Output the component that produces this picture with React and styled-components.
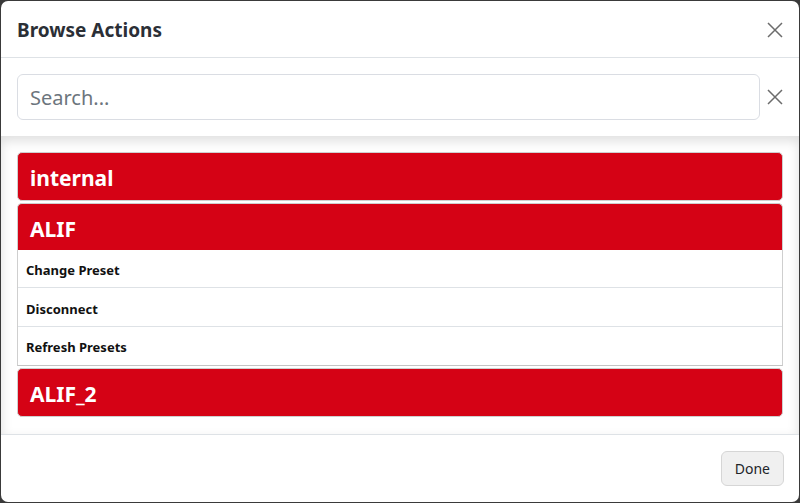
import React, { useState } from "react";
import styled, { createGlobalStyle } from "styled-components";

const GlobalStyle = createGlobalStyle`
    html, body {
        margin: 0;
        padding: 0;
        height: 100%;
        background: #3a3a3a;
        font-family: "Noto Sans", "Open Sans", sans-serif;
    }
    #root {
        height: 100%;
        padding: 1px;
        box-sizing: border-box;
    }
    * {
        box-sizing: border-box;
    }
`;

const groups = [
    { id: "internal", label: "internal", open: false, actions: [] },
    {
        id: "alif",
        label: "ALIF",
        open: true,
        actions: ["Change Preset", "Disconnect", "Refresh Presets"],
    },
    { id: "alif_2", label: "ALIF_2", open: false, actions: [] },
];

const CloseIcon = ({ size = 16 }) => (
    <svg width={size} height={size} viewBox="0 0 16 16">
        <path
            d="M1 1 L15 15 M15 1 L1 15"
            stroke="#6c6c6c"
            strokeWidth="1.5"
            fill="none"
        />
    </svg>
);

const App = () => {
    const [search, setSearch] = useState("");
    const [openGroups, setOpenGroups] = useState(
        groups.filter((g) => g.open).map((g) => g.id)
    );

    const toggle = (id) => {
        setOpenGroups((prev) =>
            prev.includes(id) ? prev.filter((x) => x !== id) : [...prev, id]
        );
    };

    return (
        <>
            <GlobalStyle />
            <Modal>
                <Header>
                    <Title>Browse Actions</Title>
                    <IconButton aria-label="Close">
                        <CloseIcon />
                    </IconButton>
                </Header>
                <SearchRow>
                    <SearchInput
                        placeholder="Search..."
                        value={search}
                        onChange={(e) => setSearch(e.target.value)}
                    />
                    <IconButton onClick={() => setSearch("")} aria-label="Clear">
                        <CloseIcon />
                    </IconButton>
                </SearchRow>
                <Body>
                    {groups.map((group) => {
                        const isOpen =
                            openGroups.includes(group.id) &&
                            group.actions.length > 0;
                        return (
                            <Group key={group.id}>
                                <GroupHeader
                                    isOpen={isOpen}
                                    onClick={() => toggle(group.id)}
                                >
                                    {group.label}
                                </GroupHeader>
                                {isOpen && (
                                    <ActionList>
                                        {group.actions.map((action) => (
                                            <ActionItem key={action}>
                                                {action}
                                            </ActionItem>
                                        ))}
                                    </ActionList>
                                )}
                            </Group>
                        );
                    })}
                </Body>
                <Footer>
                    <DoneButton>Done</DoneButton>
                </Footer>
            </Modal>
        </>
    );
};

export default App;

const Modal = styled.div`
    height: 100%;
    background: #fff;
    border-radius: 7px;
    display: flex;
    flex-direction: column;
    overflow: hidden;
`;

const Header = styled.div`
    height: 57px;
    flex-shrink: 0;
    display: flex;
    align-items: center;
    justify-content: space-between;
    padding: 2px 15px 0 16px;
    border-bottom: 1px solid #dee2e6;
`;

const Title = styled.h5`
    margin: 0;
    font-size: 19px;
    font-weight: 700;
    color: #2b2f36;
`;

const IconButton = styled.button`
    border: none;
    background: transparent;
    padding: 0;
    width: 18px;
    height: 18px;
    display: flex;
    align-items: center;
    justify-content: center;
    cursor: pointer;
`;

const SearchRow = styled.div`
    flex-shrink: 0;
    display: flex;
    align-items: center;
    gap: 6px;
    padding: 16px 15px 16px 16px;
`;

const SearchInput = styled.input`
    flex: 1;
    height: 46px;
    border: 1px solid #dadde3;
    border-radius: 6px;
    padding: 0 12px;
    font-family: "Noto Sans", "Open Sans", sans-serif;
    font-size: 20px;
    color: #212529;
    outline: none;

    &::placeholder {
        color: #6c757d;
    }
`;

const Body = styled.div`
    flex: 1;
    padding: 16px 16px;
    box-shadow: inset 0 5px 12px rgba(0, 0, 0, 0.13);
    overflow: hidden;
    border-bottom: 1px solid #dee2e6;
`;

const Group = styled.div`
    margin-bottom: 2px;
`;

const GroupHeader = styled.div`
    height: ${({ isOpen }) => (isOpen ? "47px" : "49px")};
    display: flex;
    align-items: center;
    padding: 3px 12px 0;
    background: #d50215;
    color: #fff;
    font-size: 21px;
    font-weight: 700;
    border: 1px solid #cfcfcf;
    border-bottom: ${({ isOpen }) => (isOpen ? "none" : "1px solid #cfcfcf")};
    border-radius: ${({ isOpen }) => (isOpen ? "5px 5px 0 0" : "5px")};
    cursor: pointer;
`;

const ActionList = styled.ul`
    list-style: none;
    margin: 0;
    padding: 0;
    border: 1px solid #cfcfcf;
    border-top: none;
    border-bottom: 1px solid #c4c4c4;
`;

const ActionItem = styled.li`
    height: 38.4px;
    display: flex;
    align-items: center;
    padding: 3px 8px 0;
    font-size: 13px;
    font-weight: 700;
    color: #111;
    border-bottom: 1px solid #dee2e6;

    &:last-child {
        border-bottom: none;
    }
`;

const Footer = styled.div`
    height: 67px;
    flex-shrink: 0;
    display: flex;
    align-items: center;
    justify-content: flex-end;
    padding: 0 15px;
`;

const DoneButton = styled.button`
    height: 35px;
    padding: 0 13px;
    background: #f0f0f0;
    border: 1px solid #d6d6d6;
    border-radius: 6px;
    font-family: "Noto Sans", "Open Sans", sans-serif;
    font-size: 14px;
    color: #212529;
    cursor: pointer;
`;
